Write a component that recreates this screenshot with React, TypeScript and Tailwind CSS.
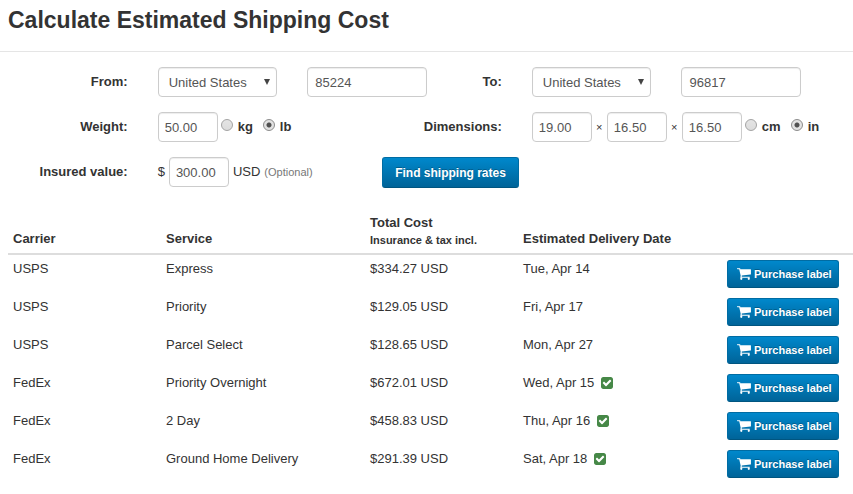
import React, { useState } from 'react';

type Rate = { carrier: string; service: string; cost: string; date: string; guaranteed?: boolean };

const rates: Rate[] = [
  { carrier: 'USPS', service: 'Express', cost: '$334.27 USD', date: 'Tue, Apr 14' },
  { carrier: 'USPS', service: 'Priority', cost: '$129.05 USD', date: 'Fri, Apr 17' },
  { carrier: 'USPS', service: 'Parcel Select', cost: '$128.65 USD', date: 'Mon, Apr 27' },
  { carrier: 'FedEx', service: 'Priority Overnight', cost: '$672.01 USD', date: 'Wed, Apr 15', guaranteed: true },
  { carrier: 'FedEx', service: '2 Day', cost: '$458.83 USD', date: 'Thu, Apr 16', guaranteed: true },
  { carrier: 'FedEx', service: 'Ground Home Delivery', cost: '$291.39 USD', date: 'Sat, Apr 18', guaranteed: true },
];

const labelClass = 'text-right leading-[30px] font-bold';
const fieldClass = 'h-[30px] rounded border border-[#cccccc] bg-white text-[#555555] shadow-[inset_0_1px_1px_rgba(0,0,0,0.075)]';
const buttonClass = 'rounded-[3px] border border-[#006ca3] border-b-[#005580] bg-linear-to-b from-[#0088cc] to-[#006499] font-bold text-white [text-shadow:0_-1px_0_rgba(0,0,0,0.25)]';

const CartIcon = () => (
  <svg viewBox="0 0 1792 1792" fill="currentColor" className="mb-0.5 size-[15px] shrink-0" aria-hidden="true">
    <path d="M640 1536q0 52-38 90t-90 38-90-38-38-90 38-90 90-38 90 38 38 90zm896 0q0 52-38 90t-90 38-90-38-38-90 38-90 90-38 90 38 38 90zm128-1088v512q0 24-16.5 42.5t-40.5 21.5l-1044 122q13 60 13 70 0 16-24 64h920q26 0 45 19t19 45-19 45-45 19h-1024q-26 0-45-19t-19-45q0-11 8-31.5t16-36 21.5-40 15.5-29.5l-177-823h-204q-26 0-45-19t-19-45 19-45 45-19h256q16 0 28.5 6.5t19.5 15.5 13 24.5 8 26 5.5 29.5 4.5 26h1201q26 0 45 19t19 45z" />
  </svg>
);

const CheckIcon = () => (
  <svg viewBox="128 128 1536 1536" fill="currentColor" className="size-3 text-[#468847]" role="img" aria-label="Guaranteed">
    <path d="M813 1299l614-614q19-19 19-45t-19-45l-102-102q-19-19-45-19t-45 19l-467 467-211-211q-19-19-45-19t-45 19l-102 102q-19 19-19 45t19 45l358 358q19 19 45 19t45-19zm851-883v960q0 119-84.5 203.5t-203.5 84.5h-960q-119 0-203.5-84.5t-84.5-203.5v-960q0-119 84.5-203.5t203.5-84.5h960q119 0 203.5 84.5t84.5 203.5z" />
  </svg>
);

const CountrySelect = ({ id }: { id: string }) => (
  <div className="relative col-span-2">
    <select id={id} defaultValue="US" className={`${fieldClass} w-full appearance-none pt-px pr-5 pl-[10px]`}>
      <option value="US">United States</option>
      <option value="CA">Canada</option>
    </select>
    <svg viewBox="0 0 6 6" className="pointer-events-none absolute top-3 right-[7px] size-[6px] fill-[#444444]" aria-hidden="true">
      <path d="M0 0h6L3 6z" />
    </svg>
  </div>
);

const UnitRadios = ({ name, units, value, onChange }: { name: string; units: string[]; value: string; onChange: (unit: string) => void }) => (
  <>
    {units.map(unit => (
      <label key={unit} className="mr-[10px] flex items-center gap-[5px] font-bold">
        <input
          type="radio"
          name={name}
          checked={value === unit}
          onChange={() => onChange(unit)}
          className="mb-1 size-3 appearance-none rounded-full border border-[#a3a3a3] bg-linear-to-b from-[#e4e4e4] to-[#dcdcdc] checked:border-[#8c8c8c] checked:bg-[radial-gradient(circle,#505050_0_2px,#e2e2e2_3px)]"
        />
        {unit}
      </label>
    ))}
  </>
);

export default function App() {
  const [weightUnit, setWeightUnit] = useState('lb');
  const [sizeUnit, setSizeUnit] = useState('in');

  return (
    <div className="overflow-x-hidden bg-white font-['Liberation_Sans',Arial,sans-serif] text-[13px] leading-[18px] text-[#333333]">
      <h1 className="border-b border-[#e5e5e5] px-2 pt-1 pb-[15px] text-[23px] leading-8 font-bold">Calculate Estimated Shipping Cost</h1>

      {/* the rows run past the right edge by most of a gutter */}
      <main className="ml-2">
        <form onSubmit={e => e.preventDefault()} className="-mr-[23px] grid grid-cols-12 items-start gap-x-[30px] gap-y-[15px] pt-[15px]">
          <label htmlFor="from" className={`${labelClass} col-span-2`}>From:</label>
          <CountrySelect id="from" />
          <input aria-label="From postal code" defaultValue="85224" className={`${fieldClass} col-span-2 px-[7px]`} />
          <label htmlFor="to" className={labelClass}>To:</label>
          <CountrySelect id="to" />
          <input aria-label="To postal code" defaultValue="96817" className={`${fieldClass} col-span-2 px-[7px]`} />

          <label htmlFor="weight" className={`${labelClass} col-span-2 col-start-1`}>Weight:</label>
          <div className="col-span-3 flex items-center">
            <input id="weight" defaultValue="50.00" className={`${fieldClass} mr-[3px] w-[60px] px-[6px]`} />
            <UnitRadios name="weight-unit" units={['kg', 'lb']} value={weightUnit} onChange={setWeightUnit} />
          </div>
          <label htmlFor="length" className={`${labelClass} col-span-2`}>Dimensions:</label>
          <div className="col-span-5 flex items-center">
            <input id="length" defaultValue="19.00" className={`${fieldClass} w-[60px] px-[6px]`} />
            <span className="w-[15px] text-center text-[11px]">×</span>
            <input aria-label="Width" defaultValue="16.50" className={`${fieldClass} w-[60px] px-[6px]`} />
            <span className="w-[15px] text-center text-[11px]">×</span>
            <input aria-label="Height" defaultValue="16.50" className={`${fieldClass} mr-[3px] w-[60px] px-[6px]`} />
            <UnitRadios name="size-unit" units={['cm', 'in']} value={sizeUnit} onChange={setSizeUnit} />
          </div>

          <label htmlFor="insured" className={`${labelClass} col-span-2`}>Insured value:</label>
          <div className="col-span-3 flex items-center gap-1">
            <span>$</span>
            <input id="insured" defaultValue="300.00" className={`${fieldClass} w-[60px] px-[6px]`} />
            <span>USD</span>
            <span className="text-[11px] text-[#777777]">(Optional)</span>
          </div>
          <div className="col-span-4">
            <button type="submit" className={`${buttonClass} h-[31px] px-3 text-xs`}>Find shipping rates</button>
          </div>
        </form>

        <div className="-mr-[22px] pt-[21px]">
          <table className="w-full table-fixed text-left">
            <colgroup>
              <col className="w-3/17" />
              <col className="w-4/17" />
              <col className="w-3/17" />
              <col className="w-4/17" />
              <col className="w-3/17" />
            </colgroup>
            <thead>
              <tr className="border-b-2 border-[#dddddd] align-bottom">
                <th className="p-[5px]">Carrier</th>
                <th className="p-[5px]">Service</th>
                <th className="p-[5px]">Total Cost<div className="text-[11px] leading-4">Insurance &amp; tax incl.</div></th>
                <th className="p-[5px]">Estimated Delivery Date</th>
                <th className="p-[5px]" aria-label="Purchase" />
              </tr>
            </thead>
            <tbody>
              {rates.map(rate => (
                <tr key={rate.service} className="align-top">
                  <td className="p-[5px]">{rate.carrier}</td>
                  <td className="p-[5px]">{rate.service}</td>
                  <td className="p-[5px]">{rate.cost}</td>
                  <td className="p-[5px]">
                    <div className="flex items-center gap-[7px]">
                      {rate.date}
                      {rate.guaranteed && <CheckIcon />}
                    </div>
                  </td>
                  <td className="p-[5px]">
                    <button type="button" className={`${buttonClass} flex h-7 items-center gap-0.5 pr-[6px] pl-[9px] text-[11px] whitespace-nowrap`}>
                      <CartIcon />
                      Purchase label
                    </button>
                  </td>
                </tr>
              ))}
            </tbody>
          </table>
        </div>
      </main>
    </div>
  );
}
